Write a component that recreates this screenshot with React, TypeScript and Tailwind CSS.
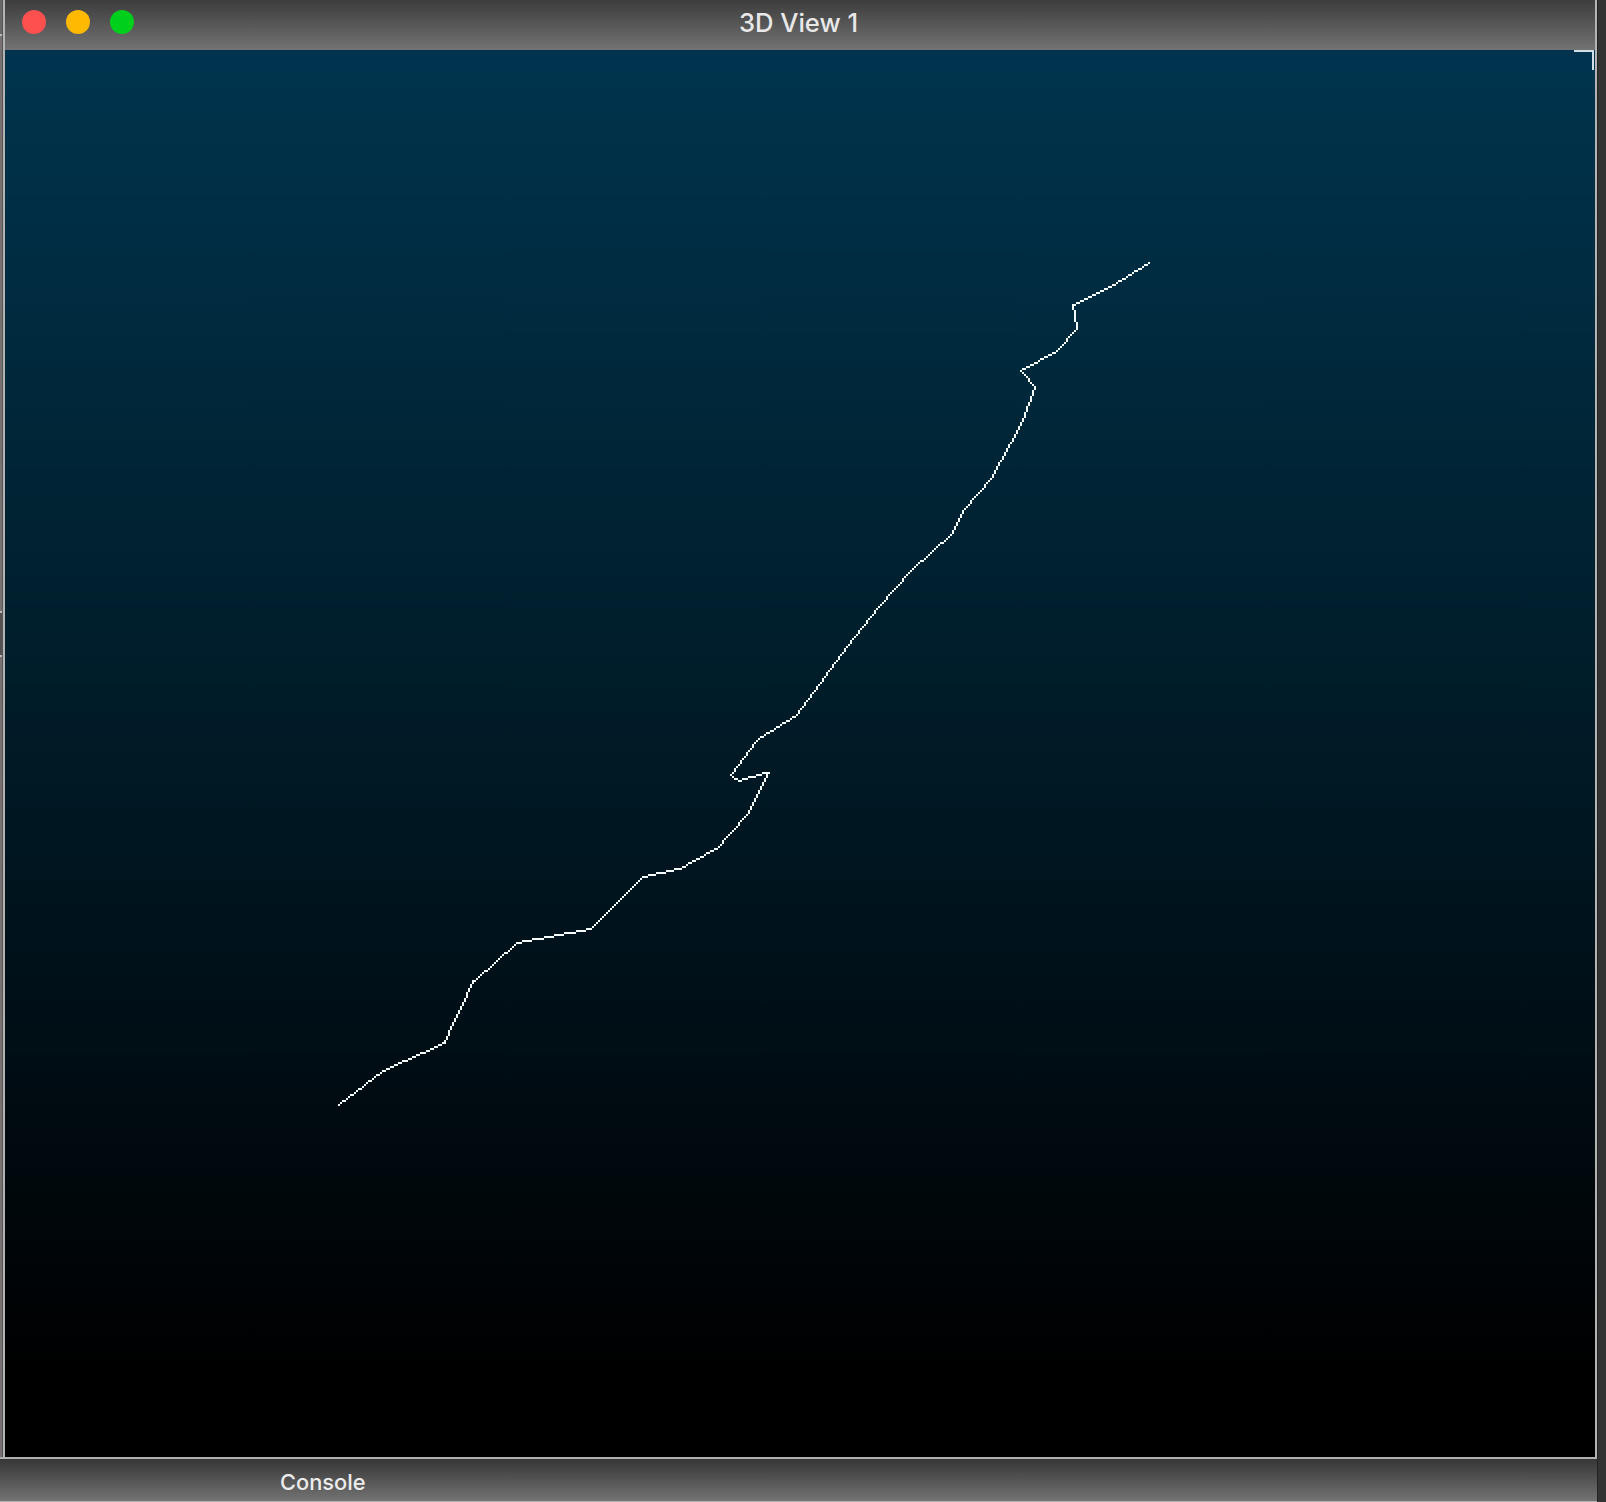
const VERTICES: [number, number][] = [
  [574, 131], [558, 141], [536, 152], [538, 164], [528, 175], [510, 185], [517, 193],
  [511, 210], [500, 230], [495, 239], [489, 246], [481, 255], [476, 266], [465, 276],
  [456, 284], [446, 295], [439, 303], [423, 323], [398, 357], [382, 367], [379, 369],
  [377, 371], [365, 387], [369, 390], [382, 386], [384, 386], [380, 393], [376, 401],
  [374, 406], [363, 418], [359, 423], [343, 432], [339, 434], [321, 438], [295, 464],
  [258, 471], [238, 489], [236, 490], [233, 497], [226, 511], [222, 521], [191, 535],
  [169, 552],
];

// Pixel offset of the viewport's top-left corner within the cell grid.
const OX = 5;
const OY = 50;

// Aliased polyline made of 2px square cells.
function rasterize(points: [number, number][]) {
  let d = "";
  for (let i = 1; i < points.length; i++) {
    const [x0, y0] = points[i - 1];
    const [x1, y1] = points[i];
    const n = Math.max(Math.abs(x1 - x0), Math.abs(y1 - y0));
    for (let k = 0; k <= n; k++) {
      const x = Math.round(x0 + ((x1 - x0) * k) / n) * 2 - OX;
      const y = Math.round(y0 + ((y1 - y0) * k) / n) * 2 - OY;
      d += `M${x} ${y}h2v2h-2z`;
    }
  }
  return d;
}

function TitleBar() {
  return (
    <header className="relative flex h-[50px] shrink-0 items-center justify-center bg-linear-to-b from-[#3d3d3d] to-[#737373] pb-[4px]">
      <div className="absolute top-[10px] left-[17px] flex gap-[20px]">
        <span className="size-6 rounded-full bg-[#ff5050]" />
        <span className="size-6 rounded-full bg-[#ffb900]" />
        <span className="size-6 rounded-full bg-[#00cf1c]" />
      </div>
      <h1 className="pr-[3px] text-[25.6px] leading-none font-medium text-[#e8e8e8]">3D View 1</h1>
    </header>
  );
}

function Viewport() {
  return (
    <main className="relative flex-1 bg-[linear-gradient(to_bottom,#00344e_0%,#001b27_48%,#000d14_72%,#000000_94%)]">
      <svg className="block" width="1590" height="1407" shapeRendering="crispEdges" aria-label="Polyline">
        <path d={rasterize(VERTICES)} fill="#f4fbfb" />
      </svg>
      <span className="absolute top-0 right-[1px] h-5 w-5 border-t-2 border-r-2 border-[#d3dfe6]" />
    </main>
  );
}

export default function App() {
  return (
    <div className="flex h-[1502px] w-[1606px] overflow-hidden bg-[#333333] font-['Inter',sans-serif]">
      <div className="flex w-[1597px] flex-col">
        <div className="flex h-[1457px]">
          <div className="flex w-[3px] flex-col border-r border-[#555555] bg-[#777171]">
            <div className="h-[36px] border-b-2 border-[#bbbbbb] bg-[#686868]" />
            <div className="h-[577px] border-b-2 border-[#bbbbbb]" />
            <div className="h-[44px] border-b-2 border-[#bbbbbb] bg-[#555052]" />
          </div>
          <section className="flex w-[1594px] flex-col border-r-2 border-l-2 border-[#b4b4b4]">
            <TitleBar />
            <Viewport />
          </section>
        </div>
        <footer className="flex h-[45px] items-center border-t-2 border-b border-t-[#b0b0b0] border-b-[#b4b4b4] bg-linear-to-b from-[#373737] to-[#737373] pl-[280px] text-[21.8px] leading-none font-medium text-[#ececec]">
          <span className="pt-[5px]">Console</span>
        </footer>
      </div>
      <div className="flex-1 border-l border-[#232323] bg-[#333333]" />
    </div>
  );
}
